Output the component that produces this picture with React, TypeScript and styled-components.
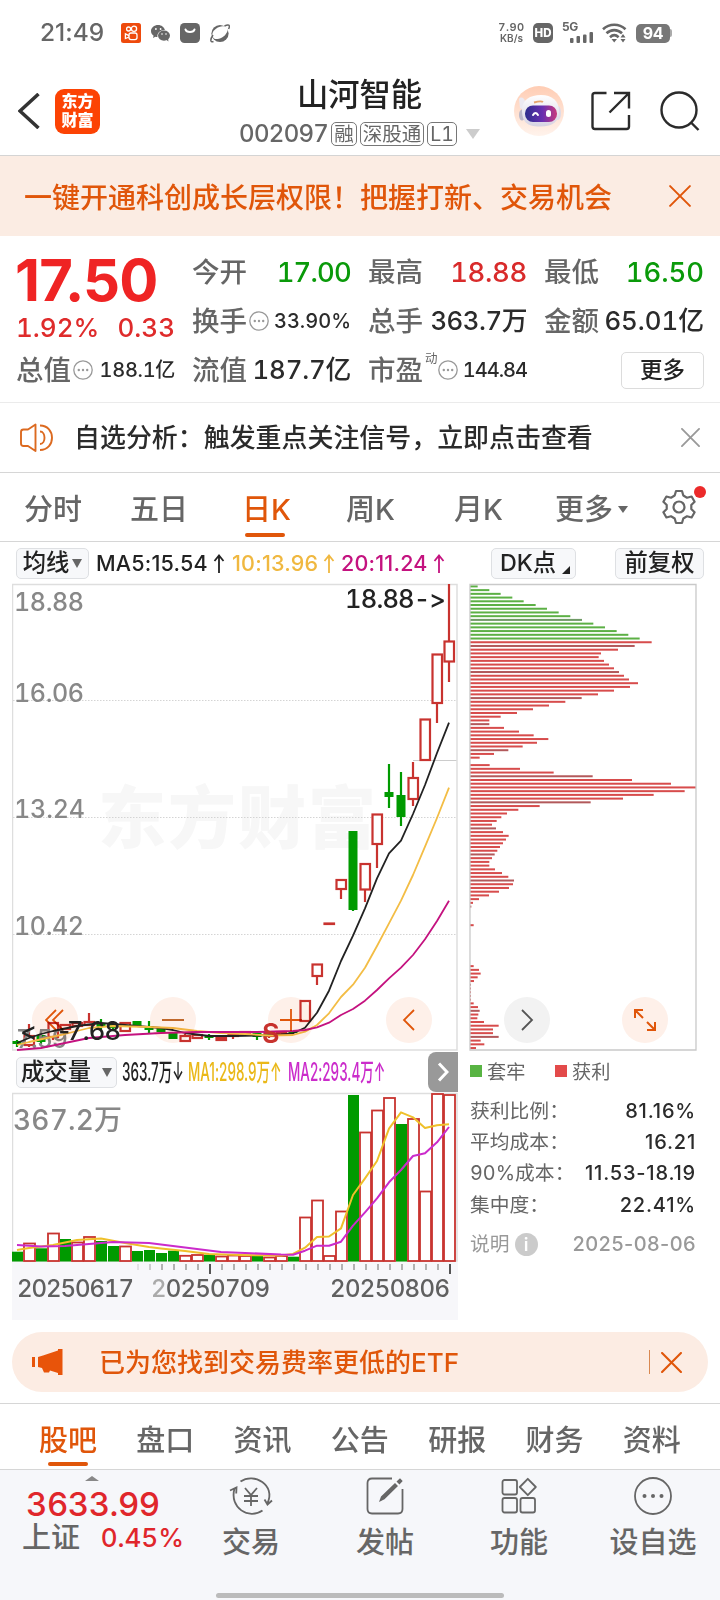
import React from "react";
import styled, { createGlobalStyle, css } from "styled-components";

const ORANGE = "#e0560a";
const RED = "#c8332f";
const GREEN = "#009a00";

const GlobalStyle = createGlobalStyle`
  * { box-sizing: border-box; }
  body {
    margin: 0;
    background: #fff;
    font-family: Inter, "Noto Sans CJK SC", sans-serif;
    font-variant-numeric: tabular-nums;
    font-variant-ligatures: no-contextual;
    color: #2b2b2b;
  }
  svg { display: block; flex: none; }
`;

const Screen = styled.div`
  width: 720px;
  height: 1600px;
  overflow: hidden;
  display: flex;
  flex-direction: column;
  background: #fff;
`;

interface LabelProps {
  $size: number;
  $color?: string;
  $weight?: number;
  $spacing?: number;
}
const Label = styled.span<LabelProps>`
  font-size: ${(p) => p.$size}px;
  line-height: 1.2;
  color: ${(p) => p.$color ?? "#2b2b2b"};
  font-weight: ${(p) => p.$weight ?? 500};
  letter-spacing: ${(p) => p.$spacing ?? 0}px;
  white-space: nowrap;
`;

/* ---------- status bar ---------- */
const StatusBar = styled.div`
  height: 66px;
  flex: none;
  display: flex;
  align-items: center;
  padding: 0 48px 0 40px;
`;
const Clock = styled(Label)`
  width: 66px;
  font-variant-numeric: normal;
`;
const StatusIcons = styled.div`
  display: flex;
  align-items: center;
  gap: 10px;
  margin-left: 15px;
  flex: 1;
`;
const Speed = styled.div`
  display: flex;
  flex-direction: column;
  align-items: center;
  font-size: 10px;
  font-weight: 600;
  line-height: 11px;
  color: #666;
  width: 27px;
  margin-right: 8px;
`;
const SpeedValue = styled.span`
  font-size: 11px;
  letter-spacing: 0.5px;
`;
const HdBadge = styled.div`
  width: 20px;
  height: 20px;
  border-radius: 5px;
  background: #666;
  color: #fff;
  font-size: 11.5px;
  font-weight: 800;
  display: flex;
  align-items: center;
  justify-content: center;
  margin-right: 8px;
`;
const Battery = styled.div`
  width: 34px;
  height: 19px;
  border-radius: 5px;
  background: #777;
  color: #fff;
  font-size: 16px;
  font-weight: 700;
  display: flex;
  align-items: center;
  justify-content: center;
`;
const BatteryCap = styled.div`
  width: 2px;
  height: 8px;
  background: #aaa;
  border-radius: 0 2px 2px 0;
`;
const Gap = styled.i<{ $w: number }>`
  width: ${(p) => p.$w}px;
  flex: none;
`;

/* ---------- header ---------- */
const Header = styled.header`
  height: 90px;
  flex: none;
  display: flex;
  border-bottom: 1px solid #d4d4d4;
  padding: 0 20px 0 18px;
`;
const HeaderSide = styled.div`
  display: flex;
  align-items: center;
  height: 90px;
`;
const AppLogo = styled.div`
  width: 45px;
  height: 45px;
  margin-left: 15px;
  border-radius: 9px;
  background: #fc4304;
  color: #fff;
  font-size: 16px;
  font-weight: 900;
  line-height: 19px;
  display: grid;
  place-content: center;
  text-align: center;
`;
const TitleBlock = styled.div`
  flex: 1;
  display: flex;
  flex-direction: column;
  align-items: center;
  padding: 11px 0 0 105px;
  gap: 5px;
`;
const CodeRow = styled.div`
  display: flex;
  align-items: center;
  gap: 3px;
`;
const Tag = styled.span`
  height: 24px;
  padding: 0 2px;
  border: 1px solid #777;
  border-radius: 5px;
  font-size: 19.5px;
  line-height: 23px;
  color: #666;
  white-space: nowrap;
`;
const Triangle = styled.i<{ $w: number; $h: number; $color: string; $up?: boolean }>`
  width: 0;
  height: 0;
  border: solid transparent;
  border-width: 0 ${(p) => p.$w / 2}px;
  ${(p) =>
    p.$up
      ? css`border-bottom: ${p.$h}px solid ${p.$color};`
      : css`border-top: ${p.$h}px solid ${p.$color};`}
`;

/* ---------- banners ---------- */
const PermissionBanner = styled.div`
  height: 80px;
  flex: none;
  display: flex;
  align-items: center;
  justify-content: space-between;
  background: #fbece3;
  padding: 0 29px 0 24px;
`;
const PermissionText = styled(Label)`
  padding-top: 5px;
`;
const Notice = styled.div`
  height: 71px;
  flex: none;
  display: flex;
  align-items: center;
  border-top: 1px solid #ebebeb;
  border-bottom: 1px solid #d6d6d6;
  padding: 0 20px;
`;
const NoticeText = styled(Label)`
  margin-left: 20px;
  flex: 1;
`;
const EtfBanner = styled.div`
  height: 60px;
  flex: none;
  margin: 12px 12px 11px;
  border-radius: 30px;
  background: #fcece3;
  display: flex;
  align-items: center;
  padding: 0 26px 0 20px;
`;
const EtfText = styled(Label)`
  margin-left: 36px;
  padding-top: 2px;
  flex: 1;
`;
const Divider = styled.div`
  width: 1px;
  height: 24px;
  background: #d98850;
  margin-right: 11px;
`;

/* ---------- quote ---------- */
const Quote = styled.section`
  height: 166px;
  flex: none;
  display: grid;
  grid-template-columns: 159px 159px 159px 160px;
  grid-template-rows: 36px 49px 49px;
  column-gap: 17px;
  padding: 18px 16px 0 16px;
`;
const PriceCell = styled.div`
  grid-row: span 2;
  display: flex;
  flex-direction: column;
`;
const Price = styled(Label)`
  line-height: 52px;
  margin-left: -1px;
  font-variant-numeric: normal;
`;
const ChangeRow = styled.div`
  display: flex;
  justify-content: space-between;
  margin-top: 6px;
`;
const Cell = styled.div<{ $first?: boolean }>`
  display: flex;
  align-items: center;
  justify-content: space-between;
  padding-top: ${(p) => (p.$first ? 0 : 13)}px;
`;
const CellLabel = styled.div`
  display: flex;
  align-items: center;
  gap: 2px;
`;
const Superscript = styled.span`
  font-size: 12.5px;
  color: #666;
  align-self: flex-start;
  margin: -6px -2px 0 0;
`;
const MoreButton = styled.button`
  width: 83px;
  height: 37px;
  margin-left: auto;
  border: 1px solid #dcdcdc;
  border-radius: 5px;
  background: #fff;
  font: 500 22.5px/1 Inter, "Noto Sans CJK SC", sans-serif;
  color: #222;
  padding: 0;
`;

/* ---------- period tabs ---------- */
const PeriodTabs = styled.nav`
  height: 69px;
  flex: none;
  display: flex;
  align-items: center;
  border-bottom: 1px solid #d6d6d6;
  padding: 5px 20px 0 24px;
`;
const Tab = styled.div<{ $active?: boolean; $width: number }>`
  width: ${(p) => p.$width}px;
  position: relative;
  display: flex;
  align-items: center;
  gap: 5px;
  font-size: 29px;
  line-height: 44px;
  white-space: nowrap;
  color: ${(p) => (p.$active ? ORANGE : "#666")};
  font-weight: 500;
`;
const Underline = styled.i<{ $left: number; $bottom: number }>`
  position: absolute;
  left: ${(p) => p.$left}px;
  bottom: ${(p) => p.$bottom}px;
  width: 40px;
  height: 4px;
  border-radius: 2px;
  background: ${ORANGE};
`;
const GearBox = styled.div`
  position: relative;
  margin-top: -5px;
`;
const RedDot = styled.i`
  position: absolute;
  right: -9px;
  top: -3px;
  width: 12px;
  height: 12px;
  border-radius: 50%;
  background: #ec2a2a;
`;

/* ---------- chart section ---------- */
const ChartSection = styled.section`
  position: relative;
  height: 778px;
  flex: none;
`;
const IndicatorBar = styled.div`
  height: 41px;
  display: flex;
  align-items: center;
  padding: 1px 16px 0;
`;
const Chip = styled.button<{ $width: number }>`
  width: ${(p) => p.$width}px;
  height: 31px;
  flex: none;
  display: flex;
  align-items: center;
  justify-content: center;
  gap: 3px;
  padding: 0;
  background: #f7f8fa;
  border: 1px solid #dee0e3;
  border-radius: 5px;
  font: 500 23.3px/1 Inter, "Noto Sans CJK SC", sans-serif;
  color: #222;
  white-space: nowrap;
`;
const Corner = styled.i`
  align-self: flex-end;
  margin: 0 -3px 4px 3px;
  border-left: 8px solid transparent;
  border-bottom: 8px solid #222;
`;
const MaItem = styled.div<{ $color: string; $width: number }>`
  width: ${(p) => p.$width}px;
  display: flex;
  align-items: center;
  gap: 5px;
  color: ${(p) => p.$color};
  font-size: 21.5px;
  font-variant-numeric: normal;
  line-height: 26px;
  letter-spacing: 0.2px;
  font-weight: 500;
  white-space: nowrap;
`;
const MaGroup = styled.div`
  display: flex;
  flex: 1;
  margin-left: 7px;
`;
const Charts = styled.div`
  display: flex;
  padding-left: 12px;
`;
const MainColumn = styled.div`
  width: 446px;
`;
const SideColumn = styled.div`
  width: 228px;
  margin-left: 11px;
`;
const VolumeHeader = styled.div`
  height: 40px;
  display: flex;
  align-items: center;
  padding-left: 4px;
`;
const Condensed = styled.div<{ $width: number; $color: string }>`
  width: ${(p) => p.$width}px;
  margin-left: 5px;
  color: ${(p) => p.$color};
  font-size: 25px;
  font-variant-numeric: normal;
  line-height: 30px;
  font-weight: 500;
  white-space: nowrap;
  transform: scaleX(0.54);
  transform-origin: 0 50%;
`;
const ExpandHandle = styled.button`
  width: 30px;
  height: 40px;
  margin-left: auto;
  border: 0;
  padding: 0;
  border-radius: 8px 0 0 8px;
  background: #999;
  display: grid;
  place-items: center;
`;
const ControlRow = styled.div`
  position: absolute;
  left: 32px;
  top: 455px;
  width: 636px;
  display: flex;
  justify-content: space-between;
  mix-blend-mode: multiply;
`;
const RoundButton = styled.button<{ $gray?: boolean }>`
  width: 46px;
  height: 46px;
  padding: 0;
  border: 0;
  border-radius: 50%;
  background: ${(p) => (p.$gray ? "#f2f2f2" : "#fef0e9")};
  display: grid;
  place-items: center;
`;
const Legend = styled.div`
  display: flex;
  align-items: center;
  height: 40px;
  padding-left: 1px;
  font-size: 19.2px;
  color: #666;
`;
const Swatch = styled.i<{ $color: string }>`
  width: 12px;
  height: 12px;
  margin-right: 5px;
  background: ${(p) => p.$color};
`;
const LegendItem = styled.div`
  width: 85px;
  display: flex;
  align-items: center;
`;
const Stats = styled.div`
  padding: 4px 1px 0 1px;
`;
const StatRow = styled.div<{ $height: number; $muted?: boolean }>`
  height: ${(p) => p.$height}px;
  display: flex;
  align-items: center;
  justify-content: space-between;
  white-space: nowrap;
  font-size: 19.8px;
  line-height: 26px;
  color: ${(p) => (p.$muted ? "#999" : "#666")};
`;
const StatValue = styled.span<{ $muted?: boolean }>`
  color: ${(p) => (p.$muted ? "#999" : "#2b2b2b")};
  font-size: 20px;
  font-weight: 500;
  font-variant-numeric: normal;
  letter-spacing: ${(p) => (p.$muted ? 0.4 : 0.8)}px;
`;
const InfoLabel = styled.div`
  display: flex;
  align-items: center;
  gap: 5px;
`;
const InfoDot = styled.span`
  width: 23px;
  height: 23px;
  border-radius: 50%;
  background: #cbcbcb;
  color: #fff;
  font-size: 18px;
  font-weight: 600;
  line-height: 23px;
  text-align: center;
`;

/* ---------- bottom ---------- */
const InfoTabs = styled.nav`
  height: 67px;
  flex: none;
  display: flex;
  border-top: 1px solid #d6d6d6;
  border-bottom: 1px solid #d6d6d6;
  padding: 15px 0 6px 39px;
`;
const BottomNav = styled.nav`
  position: relative;
  flex: 1;
  display: flex;
  background: #f6f7fa;
`;
const IndexBlock = styled.div`
  width: 184px;
  padding: 6px 0 0 22px;
  display: flex;
  flex-direction: column;
`;
const IndexArrow = styled.div`
  display: flex;
  padding-left: 63px;
`;
const IndexValue = styled(Label)`
  margin: 4px 0 0 4px;
`;
const IndexRow = styled.div`
  display: flex;
  align-items: center;
  justify-content: space-between;
  margin-top: -4px;
`;
const NavItem = styled.div`
  width: 134px;
  display: flex;
  flex-direction: column;
  align-items: center;
  padding-top: 6px;
  gap: 10px;
`;
const HomeIndicator = styled.i`
  position: absolute;
  left: 216px;
  bottom: 2px;
  width: 288px;
  height: 5px;
  border-radius: 3px;
  background: #bbb;
`;

/* ---------- icons ---------- */
const Cross = ({ size, color, width = 2 }: { size: number; color: string; width?: number }) => (
  <svg width={size} height={size} viewBox="0 0 20 20" stroke={color} strokeWidth={width} strokeLinecap="round">
    <path d="M1 1 19 19M19 1 1 19" />
  </svg>
);
const DotsCircle = () => (
  <svg width="20" height="20" viewBox="0 0 20 20">
    <circle cx="10" cy="10" r="9.2" fill="none" stroke="#999" strokeWidth="1.3" />
    <g fill="#999">
      <circle cx="5.8" cy="10" r="1.2" />
      <circle cx="10" cy="10" r="1.2" />
      <circle cx="14.2" cy="10" r="1.2" />
    </g>
  </svg>
);
const UpArrow = () => (
  <svg width="12" height="19" viewBox="0 0 12 19" fill="none" stroke="currentColor" strokeWidth="1.8">
    <path d="M6 19V1.5M1.5 7 6 1.5 10.5 7" />
  </svg>
);
const KwaiIcon = () => (
  <svg width="20" height="20" viewBox="0 0 20 20">
    <rect width="20" height="20" rx="2.5" fill="#ee4a0c" />
    <g fill="none" stroke="#fff" strokeWidth="1.3">
      <circle cx="7.6" cy="6" r="2" />
      <circle cx="13" cy="5.8" r="2.6" />
      <rect x="8" y="10" width="8" height="6.6" rx="2" />
      <path d="M8 12.6 4.4 10.8v4.8L8 14" />
    </g>
  </svg>
);
const WechatIcon = () => (
  <svg width="19" height="17" viewBox="0 0 19 17" fill="#666">
    <path d="M7.2 0C3.2 0 0 2.7 0 6.1c0 1.9 1 3.600 2.600 4.700L2 13l2.400-1.200c.7.2 1.300.3 2 .3C6 8 9 5.200 13.900 5.100 13.200 2.200 10.500 0 7.200 0Z" />
    <ellipse cx="13" cy="10.600" rx="6" ry="5.100" />
    <path d="m15 14.500 2.400 2-.3-3z" />
    <g fill="#fff">
      <circle cx="4.900" cy="4" r=".9" />
      <circle cx="9.600" cy="4" r=".9" />
      <circle cx="11" cy="9" r=".8" />
      <circle cx="15" cy="9" r=".8" />
    </g>
  </svg>
);
const BagIcon = () => (
  <svg width="20" height="20" viewBox="0 0 20 20">
    <rect width="20" height="20" rx="4.500" fill="#666" />
    <path d="M5.500 6.500C6.500 9.800 13.500 9.800 14.500 6.500" fill="none" stroke="#fff" strokeWidth="2" strokeLinecap="round" />
  </svg>
);
const PlanetIcon = () => (
  <svg width="20" height="19" viewBox="0 0 20 19">
    <circle cx="10" cy="9.500" r="8.600" fill="#666" />
    <path d="M2.500 12.500C1 8 6 3.500 11 2.500c5-1 7.500 1 6.500 4.500-1.500 4.500-6 7.500-10 8-2.500.3-4.300-.6-5-2.500Z" fill="#fff" />
    <path d="M3 11C0 15.500 0 18.500 3.500 17.600M14.500 2C18.500 0 20.500.8 18.600 5" fill="none" stroke="#666" strokeWidth="1.500" />
  </svg>
);
const SignalIcon = () => (
  <svg width="34" height="26" viewBox="0 -2 34 26" fill="#666">
    <text x="1" y="9" fontSize="12" fontWeight="700" letterSpacing="-.5">5G</text>
    <rect x="9" y="16" width="3.500" height="5" rx="1" />
    <rect x="15.500" y="14" width="3.500" height="7" rx="1" />
    <rect x="22" y="12.500" width="3.500" height="8.500" rx="1" />
    <rect x="28.500" y="10" width="3.500" height="11" rx="1" />
  </svg>
);
const WifiIcon = () => (
  <svg width="25" height="20" viewBox="0 0 25 20" fill="none" stroke="#666" strokeWidth="2.600">
    <path d="M1 6.200C7.500.2 17 .2 23.500 6.200" />
    <path d="M4.500 10.300C9 6 15.500 6 20 10.300" />
    <path d="M8 14.200c2.600-2.400 6-2.400 8.600 0" />
    <path d="m9.500 16 2.700 3.500L15 16z" fill="#666" stroke="none" />
    <path d="m18.500 14.500 2.500-3.500 2.500 3.500zM18.500 16 21 19.500l2.500-3.500z" fill="#666" stroke="none" />
  </svg>
);
const RobotIcon = () => (
  <svg width="50" height="50" viewBox="0 0 50 50">
    <defs>
      <linearGradient id="halo" x1="0" y1="0" x2="0" y2="1">
        <stop offset="0" stopColor="#ffcdb4" />
        <stop offset="1" stopColor="#fff3ec" />
      </linearGradient>
      <linearGradient id="visor" x1="0" y1="0" x2="1" y2="0">
        <stop offset="0" stopColor="#2c2e8c" />
        <stop offset=".55" stopColor="#6a2fb0" />
        <stop offset="1" stopColor="#c93a7c" />
      </linearGradient>
      <linearGradient id="helmet" x1="0" y1="0" x2="0" y2="1">
        <stop offset="0" stopColor="#fff" />
        <stop offset="1" stopColor="#d6d3e2" />
      </linearGradient>
    </defs>
    <circle cx="25" cy="25" r="25" fill="url(#halo)" />
    <path d="M5 13c2-3 5-1 6 2l-1 9-4-2z" fill="#eceaf2" />
    <ellipse cx="8" cy="29" rx="3" ry="5.500" fill="#b9b6c8" />
    <ellipse cx="44" cy="27" rx="3" ry="7" fill="#dedbe8" />
    <path d="M8 24C8 14 16 9 27 9s18 6 18 16-5 15.500-19 15.500S8 35 8 24Z" fill="url(#helmet)" />
    <path d="M20 16.500q7-2 9-.5" stroke="#e6a56e" strokeWidth="2" fill="none" />
    <rect x="11" y="19.500" width="32" height="16.500" rx="8" fill="url(#visor)" />
    <path d="M19 29q2.500-4 5 0" stroke="#fff" strokeWidth="2" fill="none" strokeLinecap="round" />
    <rect x="32" y="24" width="5" height="7" rx="2.500" fill="#fff" />
  </svg>
);
const ShareIcon = () => (
  <svg width="40" height="40" viewBox="0 0 40 40" fill="none" stroke="#2b2b2b" strokeWidth="2.400">
    <path d="M15.500 2H4Q1.500 2 1.500 4.500V35.500Q1.500 38 4 38H35.500Q38 38 38 35.500V24" />
    <path d="M23 2H38V17.500M38 2 18.500 21.500" />
  </svg>
);
const SearchIcon = () => (
  <svg width="40" height="40" viewBox="0 0 40 40" fill="none" stroke="#2b2b2b" strokeWidth="2.400">
    <circle cx="19" cy="19" r="17.500" />
    <path d="m31.500 32 7 7" />
  </svg>
);
const SpeakerIcon = () => (
  <svg width="34" height="30" viewBox="0 0 34 30" fill="none" stroke="#dc6a20" strokeWidth="1.900">
    <path d="M15.500 1.500V28L8 23H3.500Q1 23 1 20.500V9Q1 6.500 3.500 6.500H8Z" strokeLinejoin="round" />
    <path d="M20 8.500c6 0 6 12.500 0 12.500M20 2.500c16 0 16 24.500 0 24.500" />
  </svg>
);
const GearIcon = () => (
  <svg width="36" height="36" viewBox="0 0 36 36" fill="none" stroke="#666" strokeWidth="2.200" strokeLinejoin="round">
    <path d="M15 2h6l1.300 4.500 3.700 2.200 4.600-1.200 3 5.200-3.300 3.300v4l3.300 3.300-3 5.200-4.600-1.200-3.700 2.200L21 34h-6l-1.300-4.500L10 27.300l-4.600 1.200-3-5.200L5.700 20v-4l-3.300-3.300 3-5.200L10 8.700l3.700-2.200z" />
    <circle cx="18" cy="18" r="5.500" />
  </svg>
);
const HornIcon = () => (
  <svg width="31" height="27" viewBox="0 0 31 27" fill="#e8540a">
    <path d="M0 8h3v10H0zM6 8l5-1.500 15-5V0h4.500v26H26v-2l-8-2.500-1 2h-5l-2-4.500-4-1z" />
  </svg>
);
const navStroke = { fill: "none", stroke: "#666", strokeWidth: 1.8 };
const TradeIcon = () => (
  <svg width="44" height="40" viewBox="0 0 44 40" {...navStroke}>
    <path d="M11.500 5.500C25-4 47 9 38.500 27M43 24.500l-4.500 4-3-5M33.500 34.500C20 44 0 32 5.500 12.500M1 14.500l6.500-3-.3 6" />
    <path d="m16 12 6 7 6-7M22 19v11M15 20h14M15 25h14" />
  </svg>
);
const PostIcon = () => (
  <svg width="38" height="40" viewBox="0 0 38 40" {...navStroke}>
    <path d="M26 2.500H6Q1.500 2.500 1.500 7V33Q1.500 37.500 6 37.500H32Q36.500 37.500 36.500 33V13" />
    <path d="m13 26 2-5.500L29 7l3 3-13.500 13.200zM30.500 5.500 34 2.300l2.700 2.700-3.200 3.500z" fill="#666" stroke="none" />
  </svg>
);
const AppsIcon = () => (
  <svg width="36" height="40" viewBox="0 0 36 40" {...navStroke} strokeLinejoin="round">
    <rect x="1.500" y="4" width="14.500" height="14.500" rx="2" />
    <rect x="1.500" y="22" width="14.500" height="14.500" rx="2" />
    <rect x="19.500" y="22" width="14.500" height="14.500" rx="2" />
    <path d="m26.800 2.800 8 8.200-8 8.200-8-8.200z" />
  </svg>
);
const MoreIcon = () => (
  <svg width="38" height="40" viewBox="0 0 38 40">
    <circle cx="19" cy="20" r="18" {...navStroke} />
    <g fill="#666">
      <circle cx="10.500" cy="20" r="2" />
      <circle cx="19" cy="20" r="2" />
      <circle cx="27.500" cy="20" r="2" />
    </g>
  </svg>
);

/* ---------- chart data (plot coordinates) ---------- */
type Candle = [x: number, top: number, bottom: number, high: number, low: number, up: 0 | 1];
const candles: Candle[] = [
  [17, 1041, 1044, 1040, 1047, 0],
  [29, 1036, 1045, 1024, 1047, 1],
  [41, 1035, 1042, 1033, 1044, 0],
  [53, 1023, 1037, 1022, 1040, 1],
  [65, 1025, 1029, 1024, 1030, 1],
  [77, 1023, 1026, 1022, 1027, 1],
  [89, 1022, 1025, 1013, 1026, 1],
  [101, 1023, 1027, 1019, 1030, 0],
  [113, 1024, 1028, 1022, 1030, 0],
  [125, 1023, 1031, 1022, 1031, 1],
  [137, 1021, 1026, 1021, 1026, 0],
  [149, 1026, 1030, 1021, 1033, 0],
  [161, 1028, 1032, 1027, 1032, 0],
  [173, 1033, 1039, 1033, 1039, 0],
  [185, 1036, 1041, 1034, 1041, 1],
  [197, 1035, 1038, 1035, 1038, 1],
  [209, 1035, 1038, 1034, 1040, 0],
  [221, 1038, 1040, 1037, 1041, 1],
  [233, 1034, 1036, 1033, 1039, 1],
  [245, 1032, 1034, 1032, 1036, 1],
  [257, 1033, 1037, 1032, 1040, 0],
  [269, 1033, 1036, 1032, 1038, 1],
  [281, 1032, 1034, 1031, 1035, 1],
  [293, 1031, 1033, 1031, 1034, 0],
  [305, 1001, 1021, 1001, 1021, 1],
  [317, 964.500, 976, 964, 985, 1],
  [329, 923.500, 924, 923, 924, 1],
  [341, 880, 889, 880, 899, 1],
  [353, 831, 910, 831, 911, 0],
  [365, 864, 889.500, 864, 902, 1],
  [377, 814.500, 844, 814, 868, 1],
  [389, 792, 797, 764, 808, 0],
  [401, 795, 817, 772, 826, 0],
  [413, 778, 799, 762, 806, 1],
  [425, 719.500, 760, 719, 760, 1],
  [437, 654.500, 703, 654, 723, 1],
  [449, 641.500, 661.500, 584, 682, 1],
];

const tailLine = (ys: number[]) => ys.map((y, i) => `${449 - i * 12},${y}`).reverse().join(" ");
const ma5 =
  "17,1043 29,1038 41,1034 53,1031 77,1026 101,1023 125,1025 149,1027 161,1028 173,1030 185,1033 209,1036 233,1036 257,1035.500 281,1034.500 " +
  tailLine([722.7, 753, 785, 814, 840.7, 853.3, 878.3, 908.3, 935.7, 961, 990.7, 1012.7, 1027.7, 1033.3]);
const ma10 =
  "17,1045 29,1042 65,1034 89,1028 113,1026 149,1027 173,1028 197,1031 221,1033 245,1034 269,1035.500 " +
  tailLine([787.7, 818, 846.7, 875, 900.7, 923.3, 946, 967.7, 984.7, 997, 1013.3, 1025, 1031.7, 1035]);
const ma20 =
  "17,1050 41,1048 65,1043 89,1038 125,1035 161,1033 197,1032 257,1032 " +
  tailLine([900.7, 921, 939.3, 955, 967.7, 978.3, 990, 1000.7, 1009, 1015, 1022.7, 1027.3, 1030, 1031]);

const volumes: [number, 0 | 1][] = [
  [1251.7, 0], [1243.5, 1], [1248.3, 0], [1233.5, 1], [1239, 0], [1242.5, 1], [1237, 1], [1241, 0], [1246, 0],
  [1246.5, 1], [1251, 0], [1250, 0], [1253, 0], [1250.7, 0], [1255.8, 1], [1255, 1], [1254.7, 0], [1256.5, 1],
  [1255.5, 1], [1256, 1], [1255, 0], [1257.5, 1], [1256, 1], [1256.7, 0], [1217.5, 1], [1200.500, 1], [1256, 1],
  [1211.500, 1], [1095, 0], [1132.500, 1], [1110.500, 1], [1098, 1], [1124, 0], [1119, 1], [1191.500, 1],
  [1094, 1], [1095, 1],
];
const volMa1 =
  "17,1250 29,1248 53,1245 77,1240 101,1238.500 125,1243 149,1247 161,1248.500 185,1251 209,1254 240,1255 281,1255.500 " +
  tailLine([1124.3, 1125.3, 1128, 1117.3, 1112.3, 1128.7, 1161, 1178.3, 1195, 1228.3, 1236.5, 1237, 1247.7, 1254]);
const volMa2 =
  "17,1245 41,1246.500 65,1246 89,1244 113,1242 149,1243 173,1246 197,1249 221,1252 245,1253 281,1254.500 " +
  tailLine([1127, 1142.3, 1153.3, 1156, 1170, 1182.3, 1198.3, 1212.3, 1225.7, 1241.7, 1245.7, 1245.7, 1250.7, 1254.7]);

// cost distribution, one bar per price level (length in thirds of a pixel)
const chipBars = [
  23, 58, 92, 127, 161, 197, 231, 266, 301, 336, 370, 405, 440, 475, 509, 545, 494, 444, 393, 386, 402, 417, 432, 447,
  462, 477, 504, 480, 432, 384, 335, 286, 237, 189, 141, 92, 58, 58, 102, 147, 191, 235, 201, 158, 115, 72, 29, 0, 59,
  150, 251, 368, 486, 603, 678, 644, 551, 459, 362, 209, 145, 111, 94, 80, 66, 78, 99, 116, 108, 99, 90, 82, 74, 66,
  58, 58, 75, 96, 115, 132, 129, 117, 87, 57, 27, 9, 4, 0, 0, 0, 0, 11, 0, 0, 0, 0, 0, 0, 0, 0, 0, 0, 11, 27, 32, 23,
  12, 3, 3, 3, 3, 3, 11, 24, 29, 25, 22, 42, 86, 69, 69, 86, 32, 43, 18,
];

const KLineChart = () => (
  <svg width="446" height="469" viewBox="12 583 446 469">
    <text x="98" y="843" fontSize="68" fontWeight="900" fill="#f7f7f7" textLength="278">东方财富</text>
    <g stroke="#d4d4d4" strokeDasharray="1.500 1.500">
      <path d="M13 700.500H456M13 817.500H456M13 934.500H456" />
    </g>
    <path d="M413 760.500H457" stroke="#ccc" />
    <path d="M12.500 1050V584.500H457V1050Z" fill="none" stroke="#dedede" strokeWidth="1.500" />
    {candles.map(([x, top, bottom, high, low, up]) => (
      <g key={x} stroke={up ? RED : GREEN} strokeWidth="2.200">
        <path d={`M${x} ${high}V${top}M${x} ${bottom}V${low}`} />
        {up ? (
          <rect x={x - 4.5} y={top} width="9.500" height={bottom - top} fill="#fff" />
        ) : (
          <rect x={x - 4.5} y={top} width="9" height={bottom - top} fill={GREEN} stroke="none" />
        )}
      </g>
    ))}
    <g fontSize="25" fontWeight="500" fill="#888">
      <text x="14" y="610.500" textLength="70">18.88</text>
      <text x="14" y="702" textLength="70">16.06</text>
      <text x="14" y="818" textLength="71">13.24</text>
      <text x="14" y="935" textLength="70">10.42</text>
      <text x="16" y="1048" textLength="52">7.59</text>
    </g>
    <g fill="none" strokeWidth="1.800" strokeLinejoin="round">
      <polyline points={ma5} stroke="#222" />
      <polyline points={ma10} stroke="#f3bd45" />
      <polyline points={ma20} stroke="#c4127f" />
    </g>
    <g fontSize="25.500" fontWeight="500" fill="#222">
      <text x="345" y="608" textLength="101">18.88-&gt;</text>
      <text x="20" y="1040">&lt;<tspan x="56">-</tspan><tspan x="67" textLength="54">7.68</tspan></text>
    </g>
    <text x="262" y="1043" fontSize="27" fontWeight="600" fill={RED}>S</text>
  </svg>
);

const VolumeChart = () => (
  <svg width="446" height="228" viewBox="12 1092 446 228">
    <rect x="12" y="1262" width="446" height="58" fill="#f7f7fa" />
    <path d="M12.500 1261V1093.500H457V1261Z" fill="none" stroke="#dedede" strokeWidth="1.500" />
    <text x="13" y="1130" fontSize="28" fontWeight="500" fill="#888" textLength="109">367.2万</text>
    {volumes.map(([top, up], i) => {
      const x = 17 + i * 12;
      return up ? (
        <rect key={i} x={x - 5} y={top} width="11" height={1261 - top} fill="#fff" stroke={RED} strokeWidth="1.800" />
      ) : (
        <rect key={i} x={x - 5} y={top} width="11" height={1261.500 - top} fill={GREEN} />
      );
    })}
    <g fill="none" strokeWidth="2" strokeLinejoin="round">
      <polyline points={volMa1} stroke="#efc02a" />
      <polyline points={volMa2} stroke="#cb2bcb" />
    </g>
    {Array.from({ length: 27 }, (_, i) => {
      const x = 138 + i * 12;
      const major = x === 210 || x === 450;
      return (
        <path
          key={x}
          d={`M${x} 1264V${major ? 1274 : 1270}`}
          stroke={major ? "#555" : "#aaa"}
          strokeWidth={major ? 2 : 1.8}
          opacity={x < 150 ? 0.3 : x < 162 ? 0.6 : 1}
        />
      );
    })}
    <g fontSize="24" fontWeight="500" fill="#606060">
      <text x="17" y="1297" textLength="117">20250617</text>
      <text x="151" y="1297" textLength="119"><tspan fill="#aaa">2</tspan>0250709</text>
      <text x="330" y="1297" textLength="120">20250806</text>
    </g>
  </svg>
);

const CostChart = () => (
  <svg width="228" height="468" viewBox="469 583 228 468">
    {chipBars.map((len, i) => (
      <rect
        key={i}
        x="470"
        y={585.4 + i * 3.723}
        width={len / 3}
        height="2"
        fill={i < 15 ? (i === 9 ? "#6f9a66" : "#5cb045") : i % 7 === 2 ? "#b2595b" : "#d74c4c"}
      />
    ))}
    <path d="M470 1050V584.500H696V1050Z" fill="none" stroke="#c9c9c9" strokeWidth="1.300" />
  </svg>
);

/* ---------- page ---------- */
const infoTabs = ["股吧", "盘口", "资讯", "公告", "研报", "财务", "资料"];

interface QuoteCellProps {
  label: string;
  value: string;
  color?: string;
  small?: boolean;
  first?: boolean;
  sup?: string;
  spacing?: number;
}
const QuoteCell = ({ label, value, color, small, first, sup, spacing }: QuoteCellProps) => (
  <Cell $first={first}>
    <CellLabel>
      <Label $size={27.5} $color="#666">{label}</Label>
      {sup && <Superscript>{sup}</Superscript>}
      {small && <DotsCircle />}
    </CellLabel>
    <Label $size={small ? 20 : first ? 27.4 : 25.8} $color={color} $spacing={spacing}>
      {value}
    </Label>
  </Cell>
);

export default function App() {
  return (
    <Screen>
      <GlobalStyle />
      <StatusBar>
        <Clock $size={24.5} $color="#666">21:49</Clock>
        <StatusIcons>
          <KwaiIcon />
          <WechatIcon />
          <BagIcon />
          <PlanetIcon />
        </StatusIcons>
        <Speed>
          <SpeedValue>7.90</SpeedValue>
          <span>KB/s</span>
        </Speed>
        <HdBadge>HD</HdBadge>
        <SignalIcon />
        <Gap $w={7} />
        <WifiIcon />
        <Gap $w={9} />
        <Battery>94</Battery>
        <BatteryCap />
      </StatusBar>

      <Header>
        <HeaderSide>
          <svg width="22" height="36" viewBox="0 0 22 36" fill="none" stroke="#333" strokeWidth="3.500">
            <path d="M20.500 1 2 18l18.500 17" />
          </svg>
          <AppLogo>
            <span>东方</span>
            <span>财富</span>
          </AppLogo>
        </HeaderSide>
        <TitleBlock>
          <Label $size={31.3} $color="#222">山河智能</Label>
          <CodeRow>
            <Label $size={24} $color="#666" $spacing={-0.7}>002097</Label>
            <Tag>融</Tag>
            <Tag>深股通</Tag>
            <Tag>L1</Tag>
            <Gap $w={3} />
            <Triangle $w={14} $h={10} $color="#ccc" />
          </CodeRow>
        </TitleBlock>
        <HeaderSide>
          <RobotIcon />
          <Gap $w={27} />
          <ShareIcon />
          <Gap $w={29} />
          <SearchIcon />
        </HeaderSide>
      </Header>

      <PermissionBanner>
        <PermissionText $size={28} $color={ORANGE}>一键开通科创成长层权限！把握打新、交易机会</PermissionText>
        <Cross size={22} color={ORANGE} width={1.8} />
      </PermissionBanner>

      <Quote>
        <PriceCell>
          <Price $size={58} $weight={700} $color="#ef2424" $spacing={-0.8}>17.50</Price>
          <ChangeRow>
            <Label $size={26} $color="#df2b2b">1.92%</Label>
            <Label $size={26} $color="#df2b2b">0.33</Label>
          </ChangeRow>
        </PriceCell>
        <QuoteCell first label="今开" value="17.00" color="#0a9a0a" spacing={-0.8} />
        <QuoteCell first label="最高" value="18.88" color="#d92b2b" spacing={-0.3} />
        <QuoteCell first label="最低" value="16.50" color="#0a9a0a" />
        <QuoteCell small label="换手" value="33.90%" />
        <QuoteCell label="总手" value="363.7万" spacing={-0.5} />
        <QuoteCell label="金额" value="65.01亿" />
        <QuoteCell small label="总值" value="188.1亿" spacing={-0.3} />
        <QuoteCell label="流值" value="187.7亿" spacing={-0.2} />
        <QuoteCell small label="市盈" sup="动" value="144.84" spacing={-1} />
        <Cell>
          <MoreButton>更多</MoreButton>
        </Cell>
      </Quote>

      <Notice>
        <SpeakerIcon />
        <NoticeText $size={25.95} $color="#2b2b2b">自选分析：触发重点关注信号，立即点击查看</NoticeText>
        <Cross size={19} color="#999" width={1.9} />
      </Notice>

      <PeriodTabs>
        <Tab $width={106}>分时</Tab>
        <Tab $width={112}>五日</Tab>
        <Tab $width={104} $active>
          日K
          <Underline $left={3} $bottom={-5} />
        </Tab>
        <Tab $width={108}>周K</Tab>
        <Tab $width={101}>月K</Tab>
        <Tab $width={106}>
          更多
          <Triangle $w={10} $h={7} $color="#666" />
        </Tab>
        <GearBox>
          <GearIcon />
          <RedDot />
        </GearBox>
      </PeriodTabs>

      <ChartSection>
        <IndicatorBar>
          <Chip $width={73}>
            均线
            <Triangle $w={10} $h={9} $color="#666" />
          </Chip>
          <MaGroup>
            <MaItem $color="#222" $width={136}>MA5:15.54<UpArrow /></MaItem>
            <MaItem $color="#f0b840" $width={109}>10:13.96<UpArrow /></MaItem>
            <MaItem $color="#c4127f" $width={110}>20:11.24<UpArrow /></MaItem>
          </MaGroup>
          <Chip $width={85}>
            DK点
            <Corner />
          </Chip>
          <Gap $w={39} />
          <Chip $width={89}>前复权</Chip>
        </IndicatorBar>
        <Charts>
          <MainColumn>
            <KLineChart />
            <VolumeHeader>
              <Chip $width={101}>
                成交量
                <Gap $w={5} />
                <Triangle $w={10} $h={9} $color="#666" />
              </Chip>
              <Condensed $width={61} $color="#222">363.7万↓</Condensed>
              <Condensed $width={95} $color="#eab818">MA1:298.9万↑</Condensed>
              <Condensed $width={96} $color="#cb2bcb">MA2:293.4万↑</Condensed>
              <ExpandHandle>
                <svg width="12" height="20" viewBox="0 0 12 20" fill="none" stroke="#fff" strokeWidth="3">
                  <path d="m2 1.500 8 8.500-8 8.500" />
                </svg>
              </ExpandHandle>
            </VolumeHeader>
            <VolumeChart />
          </MainColumn>
          <SideColumn>
            <CostChart />
            <Legend>
              <LegendItem><Swatch $color="#58b443" />套牢</LegendItem>
              <LegendItem><Swatch $color="#e34a4a" />获利</LegendItem>
            </Legend>
            <Stats>
              <StatRow $height={31}>获利比例：<StatValue>81.16%</StatValue></StatRow>
              <StatRow $height={31}>平均成本：<StatValue>16.21</StatValue></StatRow>
              <StatRow $height={32}>90%成本：<StatValue>11.53-18.19</StatValue></StatRow>
              <StatRow $height={31}>集中度：<StatValue>22.41%</StatValue></StatRow>
              <StatRow $height={48} $muted>
                <InfoLabel>说明<InfoDot>i</InfoDot></InfoLabel>
                <StatValue $muted>2025-08-06</StatValue>
              </StatRow>
            </Stats>
          </SideColumn>
        </Charts>
        <ControlRow>
          <RoundButton>
            <svg width="20" height="22" viewBox="0 0 20 22" fill="none" stroke={ORANGE} strokeWidth="1.800">
              <path d="M11 1 1 11l10 10M18 1 8 11l10 10" />
            </svg>
          </RoundButton>
          <RoundButton>
            <svg width="22" height="22" viewBox="0 0 22 22" stroke="#c0682a" strokeWidth="2">
              <path d="M0 11H22" />
            </svg>
          </RoundButton>
          <RoundButton>
            <svg width="22" height="22" viewBox="0 0 22 22" stroke={ORANGE} strokeWidth="1.800">
              <path d="M0 11H22M11 0V22" />
            </svg>
          </RoundButton>
          <RoundButton>
            <svg width="14" height="22" viewBox="0 0 14 22" fill="none" stroke={ORANGE} strokeWidth="1.800">
              <path d="M12 1 2 11l10 10" />
            </svg>
          </RoundButton>
          <RoundButton $gray>
            <svg width="14" height="22" viewBox="0 0 14 22" fill="none" stroke="#555" strokeWidth="1.800">
              <path d="m2 1 10 10L2 21" />
            </svg>
          </RoundButton>
          <RoundButton>
            <svg width="24" height="24" viewBox="0 0 24 24" fill="none" stroke={ORANGE} strokeWidth="2">
              <path d="M2 10V2h8M2 2l8 8M14 22h8v-8M22 22l-8-8" />
            </svg>
          </RoundButton>
        </ControlRow>
      </ChartSection>

      <EtfBanner>
        <HornIcon />
        <EtfText $size={26} $color={ORANGE}>已为您找到交易费率更低的ETF</EtfText>
        <Divider />
        <Cross size={21} color={ORANGE} width={2} />
      </EtfBanner>

      <InfoTabs>
        {infoTabs.map((name, i) => (
          <Tab key={name} $width={97.5} $active={i === 0}>
            {name}
            {i === 0 && <Underline $left={9} $bottom={-3} />}
          </Tab>
        ))}
      </InfoTabs>

      <BottomNav>
        <IndexBlock>
          <IndexArrow>
            <Triangle $w={14} $h={5} $color="#888" $up />
          </IndexArrow>
          <IndexValue $size={33} $color="#e0262b" $spacing={-0.5}>3633.99</IndexValue>
          <IndexRow>
            <Label $size={29} $color="#666">上证</Label>
            <Label $size={26} $color="#e0262b">0.45%</Label>
          </IndexRow>
        </IndexBlock>
        <NavItem><TradeIcon /><Label $size={29} $color="#666">交易</Label></NavItem>
        <NavItem><PostIcon /><Label $size={29} $color="#666">发帖</Label></NavItem>
        <NavItem><AppsIcon /><Label $size={29} $color="#666">功能</Label></NavItem>
        <NavItem><MoreIcon /><Label $size={29} $color="#666">设自选</Label></NavItem>
        <HomeIndicator />
      </BottomNav>
    </Screen>
  );
}
